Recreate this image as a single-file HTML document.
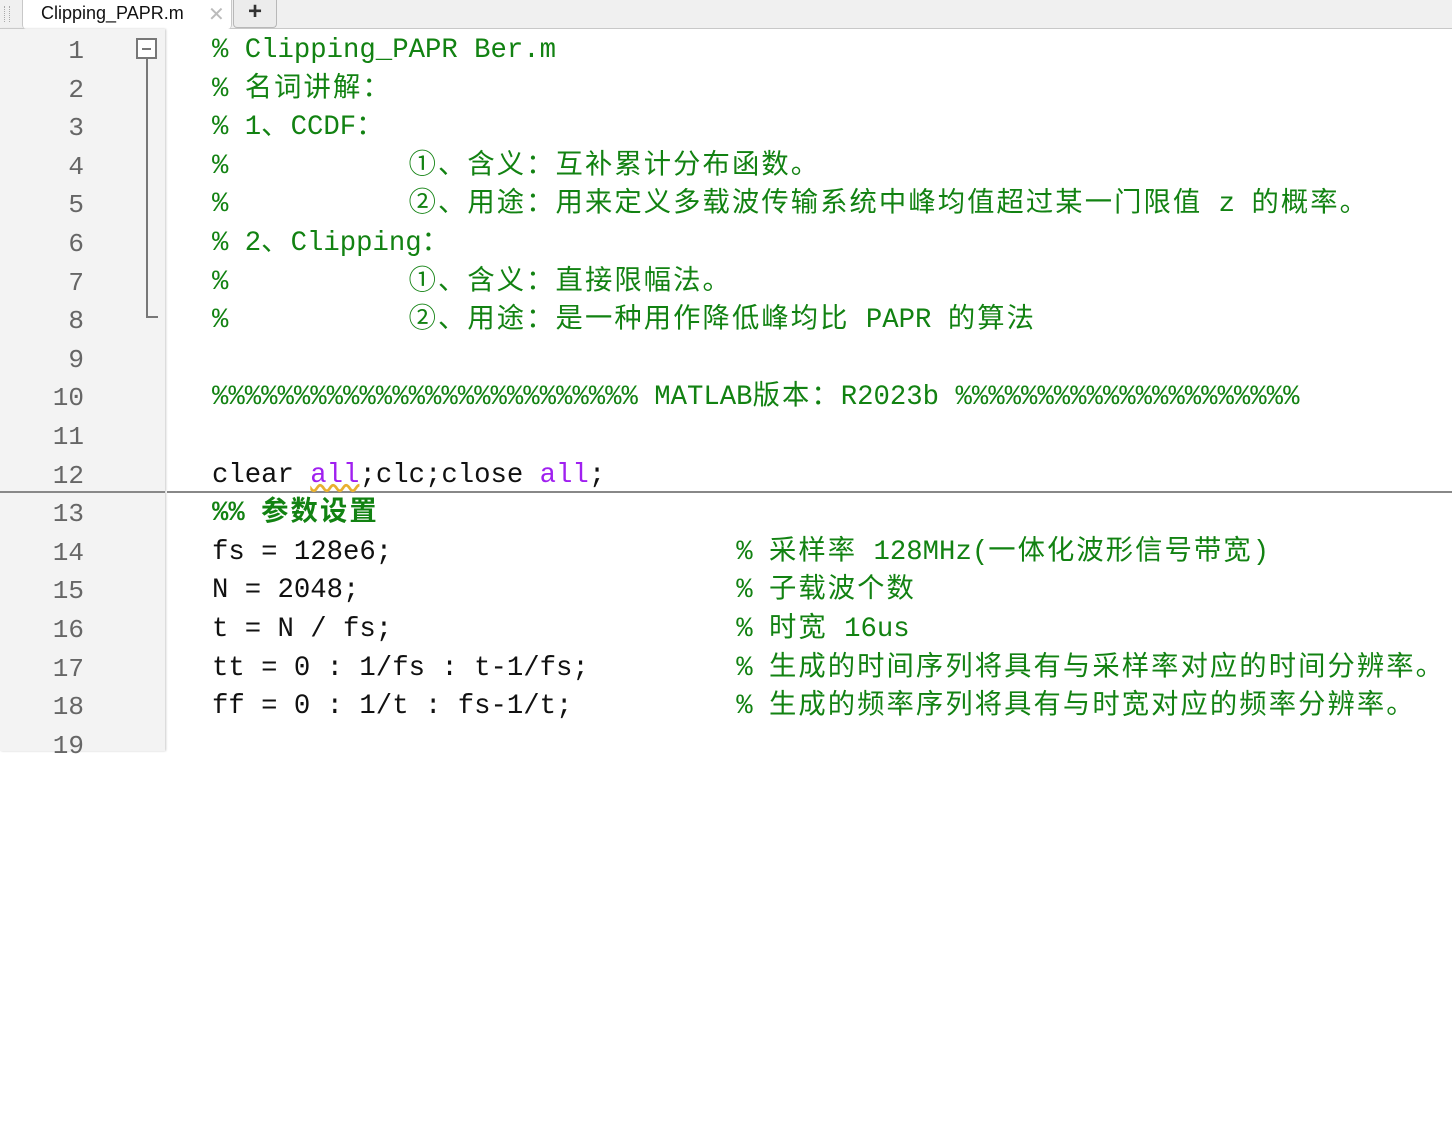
<!DOCTYPE html>
<html><head><meta charset="utf-8"><style>
body{margin:0;width:1452px;height:751px;overflow:hidden;background:#fff;position:relative;font-family:"Liberation Sans","Noto Sans CJK SC",sans-serif}
#tabs{position:absolute;left:0;top:0;width:1452px;height:28px;background:#f0f0f0;border-bottom:1px solid #c8c8c8}
.tab{position:absolute;top:0;height:28px;box-sizing:border-box}
#t1{left:22px;width:210px;background:#fff;border:1px solid #c8c8c8;border-top:none;border-bottom:none;border-radius:0 0 4px 4px;height:29px}
#t1 span{position:absolute;left:18px;top:3px;font-size:18px;color:#111}
#t1 i{position:absolute;left:185px;top:2px;font-style:normal;color:#bbb;font-size:20px}
#t2{left:233px;width:44px;border:1px solid #b8b8b8;border-top:none;border-radius:0 0 4px 4px;background:#ececec;text-align:center;font-size:24px;font-weight:bold;color:#333;line-height:24px}
#grip{position:absolute;left:4px;top:6px;width:4px;height:16px;border-left:1px dotted #aaa;border-right:1px dotted #aaa}
#gutter{position:absolute;left:0;top:29px;width:165px;height:722px;background:#f3f3f3;box-shadow:1px 0 2px #ccc}
.code{position:absolute;left:0;top:32px;font-family:"Liberation Mono","Noto Sans CJK SC",monospace;font-size:27.3px;white-space:pre}
.ln{position:absolute;width:84px;text-align:right;color:#666;font-family:"Liberation Mono",monospace;font-size:26px;height:38.6px;line-height:38.6px}
.l{position:absolute;left:212px;height:38.6px;line-height:38.6px;color:#111}
.c{color:#128212}
.k{color:#a020f0}
.z{font-family:"Noto Sans CJK SC",sans-serif;letter-spacing:2.1px;line-height:10px}
#fold{position:absolute;left:136px;top:38px;width:21px;height:21px;border:2px solid #777;background:#fff;box-sizing:border-box}
#fold:after{content:"";position:absolute;left:4px;top:8px;width:9px;height:2px;background:#777}
#fl{position:absolute;left:146px;top:59px;width:12px;height:259px;border-left:2px solid #777;border-bottom:2px solid #777;box-sizing:border-box}
#sep1{position:absolute;left:0;top:491px;width:165px;height:2px;background:#888}
#sep2{position:absolute;left:167px;top:491px;width:1285px;height:2px;background:#888}
</style></head><body>
<div id="tabs"><div id="grip"></div>
<div class="tab" id="t1"><span>Clipping_PAPR.m</span><i>✕</i></div>
<div class="tab" id="t2">+</div></div>
<div id="gutter"></div>
<div id="fold"></div><div id="fl"></div>
<div id="sep1"></div><div id="sep2"></div>
<div class="code">
<div class="ln" style="top:0">1</div>
<div class="ln" style="top:38.6px">2</div>
<div class="ln" style="top:77.2px">3</div>
<div class="ln" style="top:115.8px">4</div>
<div class="ln" style="top:154.4px">5</div>
<div class="ln" style="top:193px">6</div>
<div class="ln" style="top:231.6px">7</div>
<div class="ln" style="top:270.2px">8</div>
<div class="ln" style="top:308.8px">9</div>
<div class="ln" style="top:347.4px">10</div>
<div class="ln" style="top:386px">11</div>
<div class="ln" style="top:424.6px">12</div>
<div class="ln" style="top:463.2px">13</div>
<div class="ln" style="top:501.8px">14</div>
<div class="ln" style="top:540.4px">15</div>
<div class="ln" style="top:579px">16</div>
<div class="ln" style="top:617.6px">17</div>
<div class="ln" style="top:656.2px">18</div>
<div class="ln" style="top:694.8px">19</div>
<div class="l c" style="top:0">% Clipping_PAPR Ber.m</div>
<div class="l c" style="top:38.6px">% <span class="z">名词讲解：</span></div>
<div class="l c" style="top:77.2px">% 1<span class="z">、</span>CCDF<span class="z">：</span></div>
<div class="l c" style="top:115.8px">%           <span class="z">①、含义：互补累计分布函数。</span></div>
<div class="l c" style="top:154.4px">%           <span class="z">②、用途：用来定义多载波传输系统中峰均值超过某一门限值</span> z <span class="z">的概率。</span></div>
<div class="l c" style="top:193px">% 2<span class="z">、</span>Clipping<span class="z">：</span></div>
<div class="l c" style="top:231.6px">%           <span class="z">①、含义：直接限幅法。</span></div>
<div class="l c" style="top:270.2px">%           <span class="z">②、用途：是一种用作降低峰均比</span> PAPR <span class="z">的算法</span></div>
<div class="l c" style="top:347.4px">%%%%%%%%%%%%%%%%%%%%%%%%%% MATLAB<span class="z">版本：</span>R2023b %%%%%%%%%%%%%%%%%%%%%</div>
<div class="l" style="top:424.6px">clear <span class="k" style="text-decoration:underline wavy #e8b030">all</span>;clc;close <span class="k">all</span>;</div>
<div class="l c" style="top:463.2px;font-weight:bold">%% <span class="z">参数设置</span></div>
<div class="l" style="top:501.8px">fs = 128e6;                     <span class="c">% <span class="z">采样率</span> 128MHz(<span class="z">一体化波形信号带宽</span>)</span></div>
<div class="l" style="top:540.4px">N = 2048;                       <span class="c">% <span class="z">子载波个数</span></span></div>
<div class="l" style="top:579px">t = N / fs;                     <span class="c">% <span class="z">时宽</span> 16us</span></div>
<div class="l" style="top:617.6px">tt = 0 : 1/fs : t-1/fs;         <span class="c">% <span class="z">生成的时间序列将具有与采样率对应的时间分辨率。</span></span></div>
<div class="l" style="top:656.2px">ff = 0 : 1/t : fs-1/t;          <span class="c">% <span class="z">生成的频率序列将具有与时宽对应的频率分辨率。</span></span></div>
</div>
</body></html>
